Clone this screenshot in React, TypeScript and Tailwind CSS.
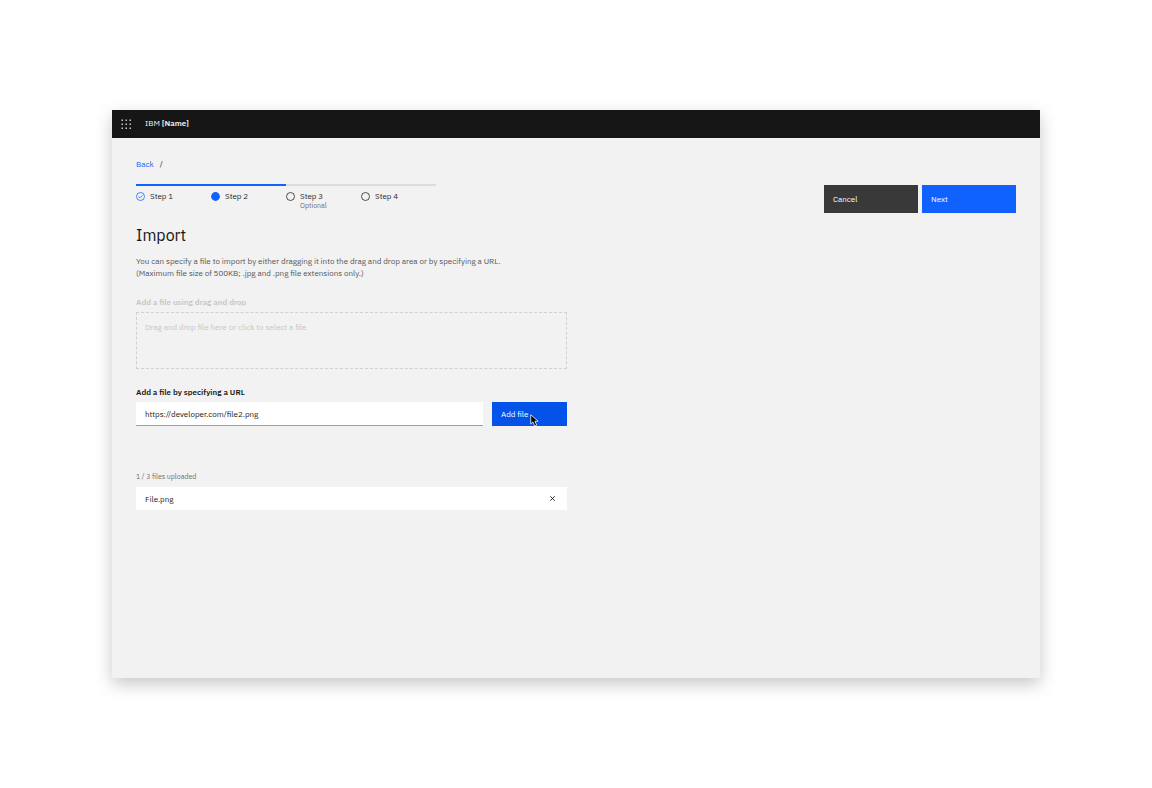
import { useState } from "react";
import type { FormEvent } from "react";

type StepState = "complete" | "current" | "incomplete";

interface Step {
  label: string;
  state: StepState;
  note?: string;
}

const steps: Step[] = [
  { label: "Step 1", state: "complete" },
  { label: "Step 2", state: "current" },
  { label: "Step 3", state: "incomplete", note: "Optional" },
  { label: "Step 4", state: "incomplete" },
];

const MAX_FILES = 3;

function StepIcon({ state }: { state: StepState }) {
  if (state === "complete") {
    return (
      <svg className="size-[9px] shrink-0 text-[#0f62fe]" viewBox="0 0 18 18" fill="none" stroke="currentColor" aria-hidden="true">
        <circle cx="9" cy="9" r="8" strokeWidth="1.5" />
        <path d="M5.2 9.2l2.6 2.6 5-5" strokeWidth="1.6" />
      </svg>
    );
  }
  if (state === "current") {
    return (
      <svg className="size-[9px] shrink-0 text-[#0f62fe]" viewBox="0 0 18 18" fill="currentColor" aria-hidden="true">
        <circle cx="9" cy="9" r="8.8" />
      </svg>
    );
  }
  return (
    <svg className="size-[9px] shrink-0 text-[#262626]" viewBox="0 0 18 18" fill="none" stroke="currentColor" aria-hidden="true">
      <circle cx="9" cy="9" r="8" strokeWidth="1.6" />
    </svg>
  );
}

function ProgressIndicator() {
  return (
    <ol className="flex">
      {steps.map((step) => (
        <li
          key={step.label}
          aria-current={step.state === "current" ? "step" : undefined}
          className={`flex w-[75px] gap-[5px] border-t-2 pt-1 ${
            step.state === "incomplete" ? "border-[#dcdcdc]" : "border-[#0f62fe]"
          }`}
        >
          <span className="flex h-3 items-center">
            <StepIcon state={step.state} />
          </span>
          <span className="flex flex-col">
            <span className="leading-3 text-[#262626]">{step.label}</span>
            {step.note && <span className="text-[7px] leading-2 text-[#6f6f6f]">{step.note}</span>}
          </span>
        </li>
      ))}
    </ol>
  );
}

function Header() {
  return (
    <header className="flex h-7 items-start bg-[#161616] text-[#f4f4f4]">
      <button type="button" aria-label="App switcher" className="flex size-7 items-center justify-center">
        <svg className="size-[11px] text-[#c6c6c6]" viewBox="0 0 22 22" fill="currentColor" aria-hidden="true">
          {[1, 9, 17].map((y) => [1, 9, 17].map((x) => <rect key={`${x}-${y}`} x={x} y={y} width="3" height="3" />))}
        </svg>
      </button>
      <p className="ml-[5px] pt-[7px] leading-3">
        IBM <span className="font-semibold">[Name]</span>
      </p>
    </header>
  );
}

function Pointer() {
  return (
    <svg className="pointer-events-none absolute top-3 left-[38px] h-[13px] w-[9px]" viewBox="0 0 18 26" aria-hidden="true">
      <path d="M1.5 1.5v18.4l4.3-4 3.6 8.2 4-1.7-3.6-8h6.4z" fill="#000" stroke="#fff" strokeWidth="1.6" />
    </svg>
  );
}

export default function App() {
  const [url, setUrl] = useState("https://developer.com/file2.png");
  const [files, setFiles] = useState<string[]>(["File.png"]);

  const addFile = (event: FormEvent) => {
    event.preventDefault();
    const name = url.split("/").pop();
    if (name && files.length < MAX_FILES && !files.includes(name)) {
      setFiles([...files, name]);
      setUrl("");
    }
  };

  return (
    <div className="min-h-screen bg-white px-28 py-[110px] font-['IBM_Plex_Sans','Noto_Sans',sans-serif] text-[8px] text-[#161616]">
      <div className="flex min-h-[568px] flex-col bg-[#f2f2f2] shadow-[0_6px_16px_rgba(0,0,0,0.22)]">
        <Header />
        <main className="px-6 pt-5 pb-6">
          <nav aria-label="Breadcrumb" className="flex gap-[6px] leading-3">
            <a href="#back" className="text-[#0f62fe]">
              Back
            </a>
            <span>/</span>
          </nav>

          <div className="mt-[14px] flex items-start justify-between">
            <ProgressIndicator />
            <div className="flex gap-1 pt-px">
              <button type="button" className="h-7 w-[94px] bg-[#393939] pl-[9px] text-left text-white">
                Cancel
              </button>
              <button type="button" className="h-7 w-[94px] bg-[#0f62fe] pl-[9px] text-left text-white">
                Next
              </button>
            </div>
          </div>

          <h1 className="mt-3 text-[16px] leading-5">Import</h1>
          <p className="mt-[10px] leading-3 text-[#525252]">
            You can specify a file to import by either dragging it into the drag and drop area or by specifying a URL.
            <br />
            (Maximum file size of 500KB; .jpg and .png file extensions only.)
          </p>

          <div className="max-w-[431px]">
            <h2 id="drop-title" className="mt-[17px] leading-3 font-semibold text-[#c6c6c6]">
              Add a file using drag and drop
            </h2>
            <button
              type="button"
              disabled
              aria-describedby="drop-title"
              className="mt-1 flex h-[57px] w-full items-start border border-dashed border-[#d0d0d0] px-2 pt-2 text-left leading-3 text-[#c6c6c6]"
            >
              Drag and drop file here or click to select a file
            </button>

            <form onSubmit={addFile}>
              <label htmlFor="file-url" className="mt-[17px] block leading-3 font-semibold">
                Add a file by specifying a URL
              </label>
              <div className="mt-1 flex gap-[9px]">
                <input
                  id="file-url"
                  type="text"
                  value={url}
                  onChange={(event) => setUrl(event.target.value)}
                  className="h-6 min-w-0 flex-1 border-b border-[#a0a0a0] bg-white px-[9px]"
                />
                <button type="submit" className="relative h-6 w-[75px] bg-[#0353e9] pl-[9px] text-left text-white">
                  Add file
                  <Pointer />
                </button>
              </div>
            </form>

            <p className="mt-[46px] text-[7px] leading-[10px] text-[#6f6f6f]">
              {files.length} / {MAX_FILES} files uploaded
            </p>
            <ul className="mt-[5px] flex flex-col gap-1">
              {files.map((file) => (
                <li key={file} className="flex h-[23px] items-center justify-between bg-white pr-[10px] pl-[9px]">
                  <span>{file}</span>
                  <button
                    type="button"
                    aria-label={`Remove ${file}`}
                    onClick={() => setFiles(files.filter((name) => name !== file))}
                    className="flex size-[9px] items-center justify-center"
                  >
                    <svg className="size-[5px]" viewBox="0 0 10 10" stroke="#161616" strokeWidth="1.8" aria-hidden="true">
                      <path d="M0.6 0.6l8.8 8.8M9.4 0.6L0.6 9.4" />
                    </svg>
                  </button>
                </li>
              ))}
            </ul>
          </div>
        </main>
      </div>
    </div>
  );
}
